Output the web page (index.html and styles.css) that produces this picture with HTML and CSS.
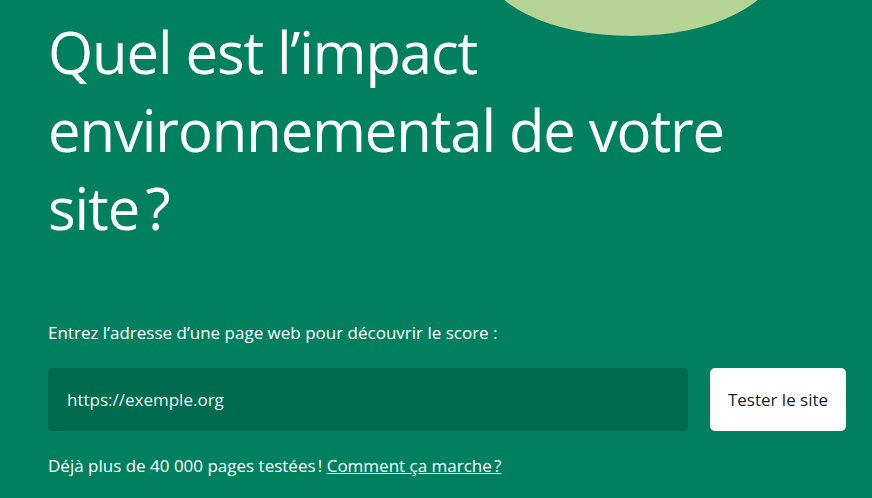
FILE: index.html
```html
<!DOCTYPE html>
<html lang="fr">
<head>
<meta charset="utf-8">
<link rel="stylesheet" href="styles.css">
<title>Impact environnemental</title>
</head>
<body>
<main class="hero">
  <div class="blob"></div>
  <h1 class="title">Quel est l’impact environnemental de votre site&#8239;?</h1>
  <form class="form">
    <label class="label" for="url">Entrez l’adresse d’une page web pour découvrir le score :</label>
    <div class="row">
      <input class="input" id="url" type="text" placeholder="https://exemple.org">
      <button class="btn" type="button">Tester le site</button>
    </div>
    <p class="note">Déjà plus de 40 000 pages testées&#8239;! <a class="link" href="#">Comment ça marche&#8239;?</a></p>
  </form>
</main>
</body>
</html>
```

FILE: styles.css
```css
* { box-sizing: border-box; }
html, body { margin: 0; padding: 0; }
body {
  background: #00805f;
  color: #ffffff;
  font-family: "Open Sans", "Noto Sans", sans-serif;
  width: 872px;
  height: 498px;
  overflow: hidden;
}
.hero {
  position: relative;
  padding: 0 26px 0 48px;
  height: 498px;
}
.blob {
  position: absolute;
  left: 482px;
  top: -116px;
  width: 298px;
  height: 152px;
  border-radius: 50%;
  background: #b6d396;
}
.title {
  position: relative;
  margin: 0;
  padding-top: 13px;
  font-weight: 400;
  font-size: 58px;
  line-height: 78px;
  letter-spacing: -1.1px;
  max-width: 720px;
}
.form { margin-top: 75px; }
.label {
  display: block;
  font-size: 17px;
  line-height: 22px;
}
.row {
  display: flex;
  gap: 22px;
  margin-top: 24px;
}
.input {
  flex: 0 0 640px;
  height: 63px;
  border: none;
  border-radius: 4px;
  background: #006b4f;
  color: #fff;
  padding: 0 19px;
  font-family: inherit;
  font-size: 17px;
}
.input::placeholder { color: #eef5f2; opacity: 1; }
.btn {
  flex: 0 0 136px;
  height: 63px;
  border: none;
  border-radius: 5px;
  background: #fff;
  color: #1b1b2a;
  font-family: inherit;
  font-size: 17px;
}
.note {
  margin: 24px 0 0;
  font-size: 17px;
  line-height: 22px;
}
.link { color: #fff; }
```
